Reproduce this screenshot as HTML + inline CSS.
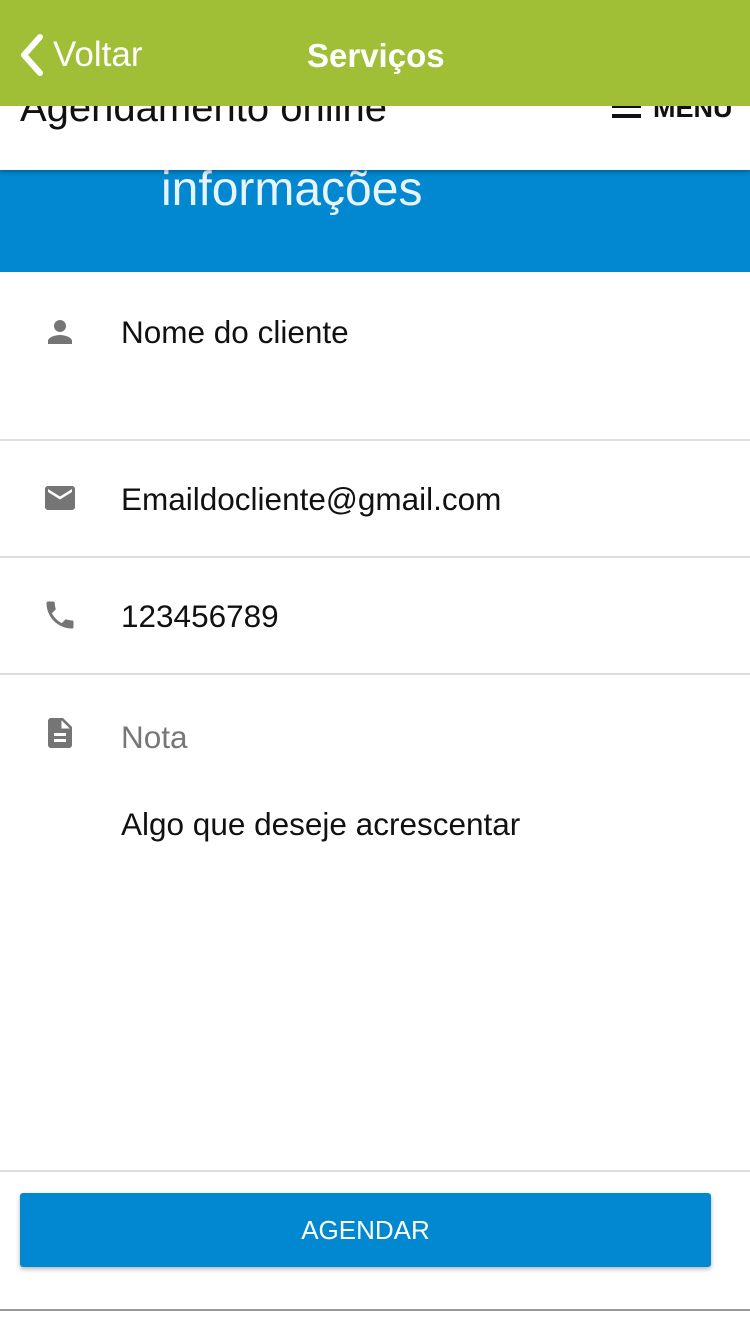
<!DOCTYPE html>
<html><head><meta charset="utf-8"><style>
*{margin:0;padding:0;box-sizing:border-box}
body{width:750px;height:1334px;background:#fff;font-family:"Liberation Sans",sans-serif;position:relative;overflow:hidden}
.abs{position:absolute}
.green{left:0;top:0;width:750px;height:106px;background:#a0bf37;z-index:3}
.white{left:0;top:106px;width:750px;height:64px;background:#fff;z-index:2;box-shadow:0 2px 4px rgba(0,0,0,.3);overflow:hidden}
.blue{left:0;top:170px;width:750px;height:102px;background:#0288d1;overflow:hidden}
.hr{left:0;width:750px;height:2px;background:#ddd}
.lbl{left:121px;font-size:31.5px;color:#111}
svg.ic{position:absolute;left:42px;width:36px;height:36px;fill:#757575}
</style></head><body>
<div class="abs green">
<svg style="position:absolute;left:18px;top:34px" width="28" height="42" viewBox="0 0 28 42"><path d="M22 3 L6 21 L22 39" stroke="#fff" stroke-width="6" fill="none" stroke-linecap="round" stroke-linejoin="round"/></svg>
<div class="abs" style="left:53px;top:35px;font-size:35px;color:#fff">Voltar</div>
<div class="abs" style="left:307px;top:37px;font-size:33px;color:#fff;font-weight:bold">Serviços</div>
</div>
<div class="abs white">
<div class="abs" style="left:20px;top:-20px;font-size:40px;color:#111">Agendamento online</div>
<div class="abs" style="left:612px;top:-2px;width:29px;height:4px;background:#111"></div>
<div class="abs" style="left:612px;top:8px;width:29px;height:4px;background:#111"></div>
<div class="abs" style="left:653px;top:-13px;font-size:27px;font-weight:bold;color:#111">MENU</div>
</div>
<div class="abs blue">
<div class="abs" style="left:161px;top:-8px;font-size:48px;color:#e8f4fb">informações</div>
</div>
<svg class="ic" style="top:314px" viewBox="0 0 24 24"><path d="M12 12c2.2 0 4-1.8 4-4s-1.8-4-4-4-4 1.8-4 4 1.8 4 4 4zm0 2c-2.7 0-8 1.3-8 4v2h16v-2c0-2.7-5.3-4-8-4z"/></svg>
<div class="abs lbl" style="top:314px">Nome do cliente</div>
<div class="abs hr" style="top:439px"></div>
<svg class="ic" style="top:480px" viewBox="0 0 24 24"><path d="M20 4H4c-1.1 0-2 .9-2 2v12c0 1.1.9 2 2 2h16c1.1 0 2-.9 2-2V6c0-1.1-.9-2-2-2zm0 4l-8 5-8-5V6l8 5 8-5v2z"/></svg>
<div class="abs lbl" style="top:481px">Emaildocliente@gmail.com</div>
<div class="abs hr" style="top:556px"></div>
<svg class="ic" style="top:597px" viewBox="0 0 24 24"><path d="M6.6 10.8c1.4 2.8 3.8 5.1 6.6 6.6l2.2-2.2c.3-.3.7-.4 1-.2 1.1.4 2.300.6 3.6.6.6 0 1 .4 1 1V20c0 .6-.4 1-1 1C10.6 21 3 13.4 3 4c0-.6.4-1 1-1h3.5c.6 0 1 .4 1 1 0 1.3.2 2.5.6 3.6.1.3 0 .7-.2 1L6.6 10.8z"/></svg>
<div class="abs lbl" style="top:598px">123456789</div>
<div class="abs hr" style="top:673px"></div>
<svg class="ic" style="top:715px" viewBox="0 0 24 24"><path d="M14 2H6c-1.1 0-2 .9-2 2v16c0 1.1.9 2 2 2h12c1.1 0 2-.9 2-2V8l-6-6zm2 16H8v-2h8v2zm0-4H8v-2h8v2zm-3-5V3.5L18.5 9H13z"/></svg>
<div class="abs lbl" style="top:719px;color:#777">Nota</div>
<div class="abs lbl" style="top:806px">Algo que deseje acrescentar</div>
<div class="abs hr" style="top:1170px"></div>
<div class="abs" style="left:20px;top:1193px;width:691px;height:74px;background:#0288d1;border-radius:3px;box-shadow:0 2px 5px rgba(0,0,0,.3);color:#fff;font-size:26px;text-align:center;line-height:74px">AGENDAR</div>
<div class="abs" style="left:0;top:1309px;width:750px;height:2px;background:#999"></div>
</body></html>
